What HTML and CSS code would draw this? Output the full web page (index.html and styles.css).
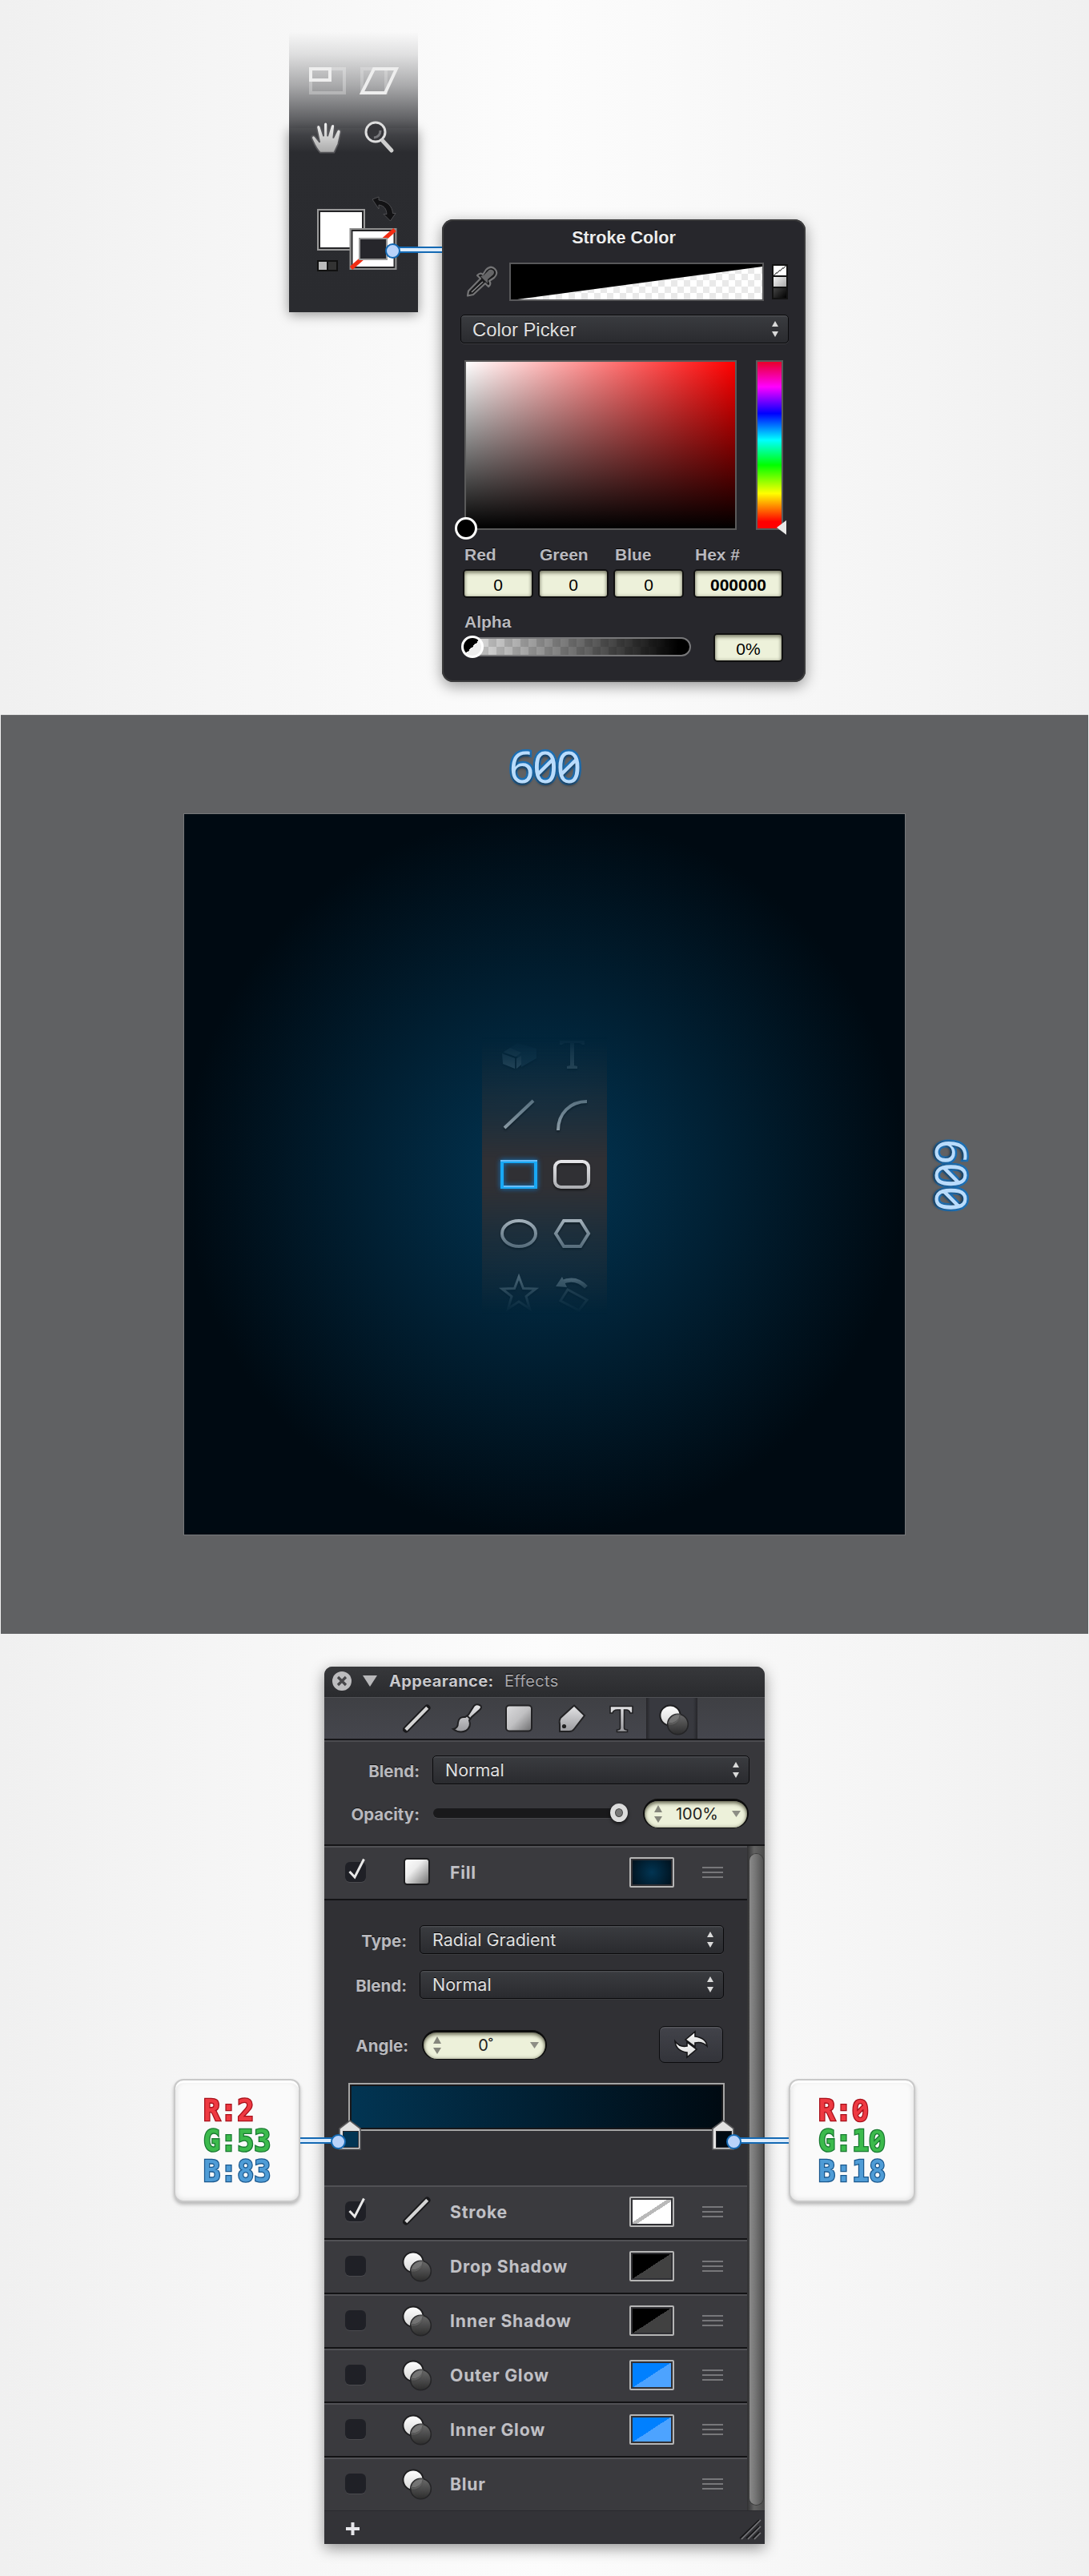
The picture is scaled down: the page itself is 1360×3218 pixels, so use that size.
FILE: index.html
```html
<!DOCTYPE html>
<html lang="en">
<head>
<meta charset="utf-8">
<title>Background setup</title>
<link rel="stylesheet" href="styles.css">
</head>
<body>
<svg class="defs" width="0" height="0" aria-hidden="true">
  <defs>
    <linearGradient id="silver" x1="0" y1="0" x2="0" y2="1"><stop offset="0" stop-color="#f4f4f4"/><stop offset="1" stop-color="#a9a9a9"/></linearGradient>
    <linearGradient id="pearl" x1="0" y1="0" x2="0" y2="1"><stop offset="0" stop-color="#fff"/><stop offset="1" stop-color="#d6d6d6"/></linearGradient>
    <linearGradient id="silverUser" gradientUnits="userSpaceOnUse" x1="0" y1="4" x2="0" y2="46"><stop offset="0" stop-color="#ededf0"/><stop offset="1" stop-color="#a6a8ac"/></linearGradient>
    <linearGradient id="steel" gradientUnits="userSpaceOnUse" x1="0" y1="2" x2="0" y2="34"><stop offset="0" stop-color="#e4e4e6"/><stop offset="1" stop-color="#9a9a9e"/></linearGradient>
    <linearGradient id="tile" x1="0" y1="0" x2="1" y2="1"><stop offset="0" stop-color="#fff"/><stop offset=".4" stop-color="#ececec"/><stop offset="1" stop-color="#6c6c6c"/></linearGradient>
    <linearGradient id="tileTool" x1="0" y1="0" x2="1" y2="1"><stop offset="0" stop-color="#dcdcde"/><stop offset=".5" stop-color="#c0c0c2"/><stop offset="1" stop-color="#6b6b6d"/></linearGradient>
    <linearGradient id="smoke" x1="0" y1="0" x2="0" y2="1"><stop offset="0" stop-color="#707070"/><stop offset="1" stop-color="#2b2b2b"/></linearGradient>
    <symbol id="i-fx" viewBox="0 0 38 42">
      <circle cx="14" cy="15" r="12.6" fill="url(#pearl)" stroke="#1e1e20" stroke-width="2"/>
      <circle cx="23.5" cy="26" r="12.8" fill="url(#smoke)" fill-opacity=".9" stroke="#252527" stroke-width="1.6"/>
      <path d="M11.5 24.5A12.6 12.6 0 0 0 26.5 13.8 12.8 12.8 0 0 0 11.5 24.5z" fill="#777" fill-opacity=".7" stroke="#555" stroke-width="1"/>
    </symbol>
    <symbol id="i-line" viewBox="0 0 36 36"><path d="M4 31.5 30.5 4.5" stroke="#19191b" stroke-width="8" stroke-linecap="round"/><path d="M3.8 31.7 30.7 4.3" stroke="#d4d4d4" stroke-width="4.2"/></symbol>
    <symbol id="i-tile" viewBox="0 0 36 36"><rect x="2" y="2" width="31" height="32" rx="3.5" fill="url(#tile)" stroke="#1d1d1f" stroke-width="2"/></symbol>
    <symbol id="i-grip" viewBox="0 0 26 14"><path d="M0 1h26M0 7h26M0 13h26" stroke="#77777a" stroke-width="2"/></symbol>
    <symbol id="i-check" viewBox="0 0 26 30"><path d="M5.5 17 12 24 23.5 1.5" fill="none" stroke="#e8e8e8" stroke-width="3"/></symbol>
    <symbol id="i-stepper" viewBox="0 0 8 20"><path d="M0 7 4 0 8 7zM0 13l4 7 4-7z" fill="#dadada"/></symbol>
    <symbol id="i-stepper2" viewBox="0 0 10 22"><path d="M0 9 5 0l5 9zM0 14l5 8 5-8z" fill="#85867c"/></symbol>
    <symbol id="i-stop" viewBox="0 0 28 38"><path d="M1 37V11L14 1.2 27 11v26z" fill="#e2e2e2" stroke="#58585a" stroke-width="1.6"/></symbol>
  </defs>
</svg>

<section class="step step-color">
  <div class="palette">
    <div class="palette-tools">
      <svg width="52" height="40" viewBox="0 0 52 40"><path d="M5 5h42v30H5z" fill="none" stroke="#fff" stroke-opacity=".28" stroke-width="4"/><path d="M5 5h24v14H5z" fill="none" stroke="#eee" stroke-width="4"/></svg>
      <svg width="52" height="40" viewBox="0 0 52 40"><path d="M5 5h30v30H5z" fill="none" stroke="#fff" stroke-opacity=".22" stroke-width="4"/><path d="M20 5h28L34 35H5z" fill="none" stroke="#eee" stroke-width="4"/></svg>
      <svg width="46" height="47" viewBox="0 0 42 44" preserveAspectRatio="none"><path d="M13.5 39C8 33 6.500 28 4 22.500 3 19 6.500 18 8.500 21L13 27 9.500 10C9 6 13 5.500 14 9L17.500 20V6C17.500 2.500 22 2.500 22 6V20L25.500 8C26.500 4.500 31 5.500 30 9L28.500 22 32.500 13.500C34 10.500 38 12 37 15.500L34 29 29.500 39z" fill="url(#silver)" stroke="#555559" stroke-width="1.6"/></svg>
      <svg width="42" height="44" viewBox="0 0 42 44"><circle cx="17" cy="16" r="12" fill="#36363a" stroke="#dedede" stroke-width="3"/><path d="M15 23q8-1 8-9" fill="none" stroke="#77777b" stroke-width="3"/><path d="M26 27 37 39" stroke="#cfcfcf" stroke-width="5" stroke-linecap="round"/></svg>
    </div>
    <svg class="palette-swatches" width="102" height="94" viewBox="0 0 102 94">
      <path d="M69 4 77 1v4c11 1 17 8 17.500 16.500H98L91.500 31 83 22.500h4C86.500 16 84 12 77 11v5z" fill="#121214" stroke="#58585c" stroke-width=".8"/>
      <rect x="1" y="17" width="58" height="50" fill="#fff" stroke="#9a9a9a" stroke-width="2"/><rect x="3" y="19" width="54" height="46" fill="#fff" stroke="#242426" stroke-width="2"/>
      <rect x="41.500" y="41" width="57" height="50" fill="#fff" stroke="#8e8e8e" stroke-width="2"/><rect x="43.500" y="43" width="53" height="46" fill="#fff" stroke="#242426" stroke-width="2"/>
      <path d="M42.500 90 97 42" stroke="#f22c12" stroke-width="5"/>
      <rect x="53" y="53" width="34" height="26" fill="#26262b" stroke="#999" stroke-width="2"/>
      <rect x="0" y="80" width="26" height="14" fill="#111"/><rect x="2" y="82" width="10" height="10" fill="#bbb"/><rect x="14" y="82" width="10" height="10" fill="#333"/>
    </svg>
    <span class="lead lead-stroke"></span>
  </div>

  <div class="popover">
    <h2 class="popover-title">Stroke Color</h2>
    <div class="preview-row">
      <svg width="40" height="42" viewBox="0 0 40 42"><path d="M3 38.500l1-6L19 17l-4-4q4-4 7-1l4-6q6-6 11-1t-1 11l-6 4q3 4-1 7l-4-4L10 37z" fill="#1a1a1c" stroke="#747476" stroke-width="2.200" stroke-linejoin="round"/><path d="M19 14l4-1 7-7q3-1 5 1t0 5l-7 6v5z" fill="#656567"/><path d="M8 34 22 21" stroke="#8a8a8c" stroke-width="1.600"/></svg>
      <div class="stroke-preview"><svg width="314" height="44" viewBox="0 0 314 44"><path d="M0 0h314v3L8 44H0z" fill="#000"/></svg></div>
      <div class="kinds"><i class="kind kind-none"></i><i class="kind kind-fill"></i><i class="kind kind-dark"></i></div>
    </div>
    <div class="select select-picker"><span>Color Picker</span><svg width="8" height="20"><use href="#i-stepper"/></svg></div>
    <div class="field-row">
      <div class="sat-box"><span class="sat-dot"></span></div>
      <div class="hue"><svg class="hue-mark" width="12" height="18" viewBox="0 0 12 18"><path d="M0 9 12 0v18z" fill="#e8e8e8"/></svg></div>
    </div>
    <div class="channels">
      <label>Red<b class="num">0</b></label><label>Green<b class="num">0</b></label><label>Blue<b class="num">0</b></label><label class="hex">Hex #<b class="num num-bold">000000</b></label>
    </div>
    <div class="alpha-label">Alpha</div>
    <div class="alpha-row"><div class="alpha"><span class="alpha-dot"></span></div><b class="num num-alpha">0%</b></div>
  </div>
</section>

<section class="stage">
  <div class="dim dim-top">600</div>
  <div class="stage-row">
    <div class="canvas">
      <div class="strip">
        <svg width="50" height="50" viewBox="0 0 50 50"><path d="M5 22 23 10l24 7v12L28 40V29z" fill="#536673"/><path d="M4 23l16 6v13L5 36zM22 29l6-3v11l-6 5zM6 21l8-5 14 6-7 5z" fill="#9eabb2"/></svg>
        <svg width="50" height="50" viewBox="0 0 50 50"><path d="M10 12V7h31v5h-3q-1-2-4-2h-6v28l4 1v3H19v-3l4-1V10h-6q-3 0-4 2z" fill="url(#silver)"/></svg>
        <svg width="50" height="50" viewBox="0 0 50 50"><path d="M7 41 43 7" stroke="#c6c9cc" stroke-width="4"/></svg>
        <svg width="50" height="50" viewBox="0 0 50 50"><path d="M8 44C8 23 23 8 44 8" fill="none" stroke="#c6c9cc" stroke-width="4"/></svg>
        <svg class="active" width="50" height="50" viewBox="0 0 50 50"><path d="M4 9h42v32H4z" fill="none" stroke="#18a8f5" stroke-width="4"/><path d="M2 8h46M6 40h38" stroke="#69bdf8" stroke-width="2"/></svg>
        <svg width="50" height="50" viewBox="0 0 50 50"><rect x="4" y="9" width="42" height="32" rx="7.500" fill="none" stroke="url(#silverUser)" stroke-width="4.200"/></svg>
        <svg width="50" height="50" viewBox="0 0 50 50"><ellipse cx="25" cy="25" rx="21" ry="16" fill="none" stroke="url(#silverUser)" stroke-width="4"/></svg>
        <svg width="50" height="50" viewBox="0 0 50 50"><path d="M15 9h21l10 16-10 16H15L5 25z" fill="none" stroke="url(#silverUser)" stroke-width="4"/></svg>
        <svg width="50" height="50" viewBox="0 0 50 50"><path d="M25 4l5.500 14.500L46 19 34 28.500 38.500 44 25 35 11.500 44 16 28.500 4 19l15.500-.5z" fill="none" stroke="url(#silver)" stroke-width="3"/></svg>
        <svg width="50" height="50" viewBox="0 0 50 50"><path d="M12 11q18-8 31 6" fill="none" stroke="url(#silver)" stroke-width="5"/><path d="M5 16 13 4l6 13z" fill="#ddd"/><path d="M20 20 44 33 34 46 11 34z" fill="none" stroke="#999" stroke-width="3"/></svg>
      </div>
    </div>
    <div class="dim dim-side">600</div>
  </div>
</section>

<section class="step step-fill">
  <div class="callout callout-left">
    <div class="ch r">R:2</div><div class="ch g">G:53</div><div class="ch b">B:83</div>
    <span class="lead lead-left"></span>
  </div>

  <div class="panel">
    <header class="panel-head">
      <svg width="24" height="24" viewBox="0 0 24 24"><circle cx="12" cy="12" r="12" fill="#bdbdbf"/><path d="M7 7l10 10M17 7 7 17" stroke="#47474a" stroke-width="3.200"/></svg>
      <svg width="18" height="14" viewBox="0 0 18 14"><path d="M0 0h18L9 14z" fill="#b8b8ba"/></svg>
      <strong>Appearance:</strong><span>Effects</span>
    </header>
    <nav class="tabs">
      <i><svg width="36" height="36"><use href="#i-line"/></svg></i>
      <i><svg width="36" height="36" viewBox="0 0 36 36"><path d="M0 31q6-1 6-8 1-8 9-7l4-3 7-11q3-3 7-1t0 6l-10 9-3 4q3 8-4 13-8 4-16-2z" fill="url(#steel)" stroke="#202022" stroke-width="2"/><path d="M17 14l5 5" stroke="#202022" stroke-width="2"/></svg></i>
      <i><svg width="36" height="36" viewBox="0 0 36 36"><rect x="2" y="1.500" width="32" height="32" rx="4" fill="url(#tileTool)" stroke="#222224" stroke-width="2"/></svg></i>
      <i><svg width="36" height="36" viewBox="0 0 36 36"><path d="M23 1.500 36 14 23 31q-2 3-6 3H5V25Q4 20 6 17z" fill="url(#steel)" stroke="#222224" stroke-width="2"/><circle cx="10.500" cy="27.500" r="2.600" fill="#222"/></svg></i>
      <i><svg width="36" height="36" viewBox="0 0 36 36"><path d="M5 11V2.500h28V11h-3q-1-4-5-4h-2.500v22.500q0 2.500 4 2.500v2.500h-13V32q4 0 4-2.500V7H14q-5 0-6 4z" fill="url(#steel)" stroke="#202022" stroke-width="1.600"/></svg></i>
      <i class="on"><svg width="38" height="42"><use href="#i-fx"/></svg></i>
    </nav>
    <div class="global">
      <div class="line"><span class="lbl">Blend:</span><div class="select"><span>Normal</span><svg width="8" height="20"><use href="#i-stepper"/></svg></div></div>
      <div class="line line-opacity"><span class="lbl">Opacity:</span><div class="track"><span class="knob"></span></div>
        <div class="pill"><svg width="10" height="22"><use href="#i-stepper2"/></svg><span>100%</span><svg width="11" height="8" viewBox="0 0 11 8"><path d="M0 0h11L5.500 8z" fill="#8d8e85"/></svg></div></div>
    </div>
    <div class="scroller">
      <div class="list">
        <div class="row"><span class="box"><svg width="26" height="30"><use href="#i-check"/></svg></span><svg class="ico" width="36" height="36"><use href="#i-tile"/></svg><span class="name">Fill</span><span class="chip chip-fill"></span><svg class="grip" width="26" height="14"><use href="#i-grip"/></svg></div>
        <div class="detail">
          <div class="line"><span class="lbl">Type:</span><div class="select"><span>Radial Gradient</span><svg width="8" height="20"><use href="#i-stepper"/></svg></div></div>
          <div class="line"><span class="lbl">Blend:</span><div class="select"><span>Normal</span><svg width="8" height="20"><use href="#i-stepper"/></svg></div></div>
          <div class="line line-angle"><span class="lbl">Angle:</span>
            <div class="pill pill-angle"><svg width="10" height="22"><use href="#i-stepper2"/></svg><span>0˚</span><svg width="11" height="8" viewBox="0 0 11 8"><path d="M0 0h11L5.500 8z" fill="#8d8e85"/></svg></div>
            <div class="swap"><svg width="46" height="34" viewBox="0 0 46 34"><path d="M16 11 28 1v6q14 2 15 12-6-6-15-4v5z" fill="url(#pearl)" stroke="#151517" stroke-width="1.600"/><path d="M30 23 18 33v-6Q4 25 3 13q6 8 15 6v-5z" fill="url(#pearl)" stroke="#151517" stroke-width="1.600"/></svg></div>
          </div>
          <div class="ramp">
            <span class="stop stop-a"><svg width="28" height="38"><use href="#i-stop"/></svg></span>
            <span class="stop stop-b"><svg width="28" height="38"><use href="#i-stop"/></svg></span>
          </div>
        </div>
        <div class="row"><span class="box"><svg width="26" height="30"><use href="#i-check"/></svg></span><svg class="ico" width="36" height="36"><use href="#i-line"/></svg><span class="name">Stroke</span><span class="chip chip-none"></span><svg class="grip" width="26" height="14"><use href="#i-grip"/></svg></div>
        <div class="row"><span class="box"></span><svg class="ico" width="38" height="42"><use href="#i-fx"/></svg><span class="name">Drop Shadow</span><span class="chip chip-dark"></span><svg class="grip" width="26" height="14"><use href="#i-grip"/></svg></div>
        <div class="row"><span class="box"></span><svg class="ico" width="38" height="42"><use href="#i-fx"/></svg><span class="name">Inner Shadow</span><span class="chip chip-dark"></span><svg class="grip" width="26" height="14"><use href="#i-grip"/></svg></div>
        <div class="row"><span class="box"></span><svg class="ico" width="38" height="42"><use href="#i-fx"/></svg><span class="name">Outer Glow</span><span class="chip chip-blue"></span><svg class="grip" width="26" height="14"><use href="#i-grip"/></svg></div>
        <div class="row"><span class="box"></span><svg class="ico" width="38" height="42"><use href="#i-fx"/></svg><span class="name">Inner Glow</span><span class="chip chip-blue"></span><svg class="grip" width="26" height="14"><use href="#i-grip"/></svg></div>
        <div class="row row-last"><span class="box"></span><svg class="ico" width="38" height="42"><use href="#i-fx"/></svg><span class="name">Blur</span><svg class="grip" width="26" height="14"><use href="#i-grip"/></svg></div>
      </div>
      <div class="bar"><div class="thumb"></div></div>
    </div>
    <footer class="panel-foot">
      <svg width="17" height="16" viewBox="0 0 17 16"><path d="M6.500 0h4v6H17v4h-6.500v6h-4v-6H0V6h6.500z" fill="#e6e6ea"/></svg>
      <svg width="26" height="26" viewBox="0 0 26 26"><path d="M0 25 24 2M8 25 24 10M16 25l8-8" stroke="#151517" stroke-width="1.600"/><path d="M2 26 26 2M10 26 26 10M18 26l8-8" stroke="#77777a" stroke-width="1.600"/></svg>
    </footer>
  </div>

  <div class="callout callout-right">
    <div class="ch r">R:<span class="z">0</span></div><div class="ch g">G:1<span class="z">0</span></div><div class="ch b">B:18</div>
    <span class="lead lead-right"></span>
  </div>
</section>
</body>
</html>
```
FILE: styles.css
```css
* { box-sizing: border-box; }
body {
  margin: 0;
  width: 1360px;
  background: linear-gradient(90deg, #f0f0f0, #f4f4f4 15%, #fcfcfc 50%, #f4f4f4 85%, #f0f0f0);
  font-family: Inter, "Liberation Sans", sans-serif;
  color: #b9b9be;
}
svg { display: block; flex: none; overflow: visible; }
.defs { position: absolute; }
.step { display: flex; align-items: flex-start; }
.step-color { height: 893px; padding-left: 361px; gap: 30px; }

/* tool palette */
.palette {
  position: relative;
  width: 161px;
  height: 350px;
  margin-top: 40px;
  padding: 41px 0 0 22px;
  background: linear-gradient(180deg, rgba(43,44,48,0), rgba(43,44,48,.12) 8%, rgba(43,44,48,.38) 19%, rgba(43,44,48,.68) 29%, rgba(43,44,48,.9) 37%, #2b2c30 43%, #2a2b2f);
}
.palette::before {
  content: "";
  position: absolute;
  inset: 120px 0 0;
  z-index: -1;
  box-shadow: 0 3px 14px rgba(0,0,0,.4);
}
.palette-tools {
  display: grid;
  grid-template-columns: 58px 58px;
  grid-template-rows: 68px 44px;
  gap: 0 6px;
}
.palette-tools svg:nth-child(3) { margin-left: 2px; }
.palette-tools svg:nth-child(4) { margin-left: 5px; }
.palette-swatches { margin: 52px 0 0 13px; }

/* pointer lines */
.lead {
  position: absolute;
  z-index: 2;
  height: 8px;
  background: #dcecfc;
  border: solid #1469b3;
  border-width: 2px 0;
}
.lead::after {
  content: "";
  position: absolute;
  top: -6px;
  width: 15px;
  height: 15px;
  border-radius: 50%;
  background: #b9d3fa;
  border: 2px solid #1469b3;
}
.lead-stroke { left: 127px; top: 268px; width: 64px; }
.lead-stroke::after { left: -7px; }
.lead-left { left: 158px; top: 73px; width: 49px; }
.lead-left::after { right: -8px; }
.lead-right { right: 158px; top: 73px; width: 70px; }
.lead-right::after { left: -8px; }

/* stroke colour popover */
.popover {
  width: 454px;
  height: 578px;
  margin-top: 274px;
  padding-top: 2px;
  border-radius: 14px;
  background: #27272c;
  box-shadow: inset 0 0 0 2px #3b3b3c, 0 5px 18px rgba(0,0,0,.4);
  font-family: "Liberation Sans", Arial, sans-serif;
}
.popover-title {
  margin: 0;
  text-align: center;
  font-size: 21.600px;
  line-height: 42px;
  color: #ececec;
  text-shadow: 0 -1px #000;
}
.preview-row { display: flex; margin: 10px 22px 0 29px; }
.preview-row > svg { margin-top: 3px; }
.stroke-preview {
  width: 318px;
  height: 48px;
  margin-left: 15px;
  border: 2px solid #58585a;
  background: #fff conic-gradient(#e9e9e9 25%, #fff 0 50%, #e9e9e9 0 75%, #fff 0) 0 4px / 16px 16px;
}
.kinds { display: flex; flex-direction: column; gap: 2px; width: 20px; height: 44px; margin: 2px 0 0 10px; padding: 2px; background: #121212; }
.kind { flex: 1; }
.kind-none { background: linear-gradient(to bottom right, #fff 46%, #777 46% 54%, #fff 54%); }
.kind-fill { background: linear-gradient(135deg, #f4f4f4, #aaa); }
.kind-dark { background: linear-gradient(135deg, #444, #000); }
.select {
  display: flex;
  align-items: center;
  justify-content: space-between;
  height: 36px;
  padding: 0 12px 0 15px;
  border: 1.500px solid #0a0a0c;
  border-radius: 5px;
  background: linear-gradient(#3a3c40, #2a2b2f);
  box-shadow: inset 0 1.500px #4b4d51, 0 1px #3c3d40;
  color: #e0e0e0;
  font-size: 21.500px;
  text-shadow: 0 -1px #000;
  white-space: nowrap;
}
.select-picker { margin: 17px 21px 0 23px; padding-left: 14px; font-size: 23.800px; }
.select-picker span { padding-top: 2px; }
.field-row { display: flex; gap: 24px; margin: 21px 0 0 28px; }
.sat-box {
  position: relative;
  width: 340px;
  height: 212px;
  border: 2px solid #5a5a5a;
  background: linear-gradient(rgba(0,0,0,0), #000), linear-gradient(90deg, #fff, #f00);
}
.sat-dot {
  position: absolute;
  left: -14px;
  bottom: -14px;
  width: 28px;
  height: 28px;
  border: 3px solid #fff;
  border-radius: 50%;
  background: #000;
}
.hue {
  position: relative;
  width: 34px;
  height: 212px;
  border: 2px solid #5a5a5a;
  background: linear-gradient(#e8002a, #f0f 15%, #00f 31%, #0ff 47%, #0f0 62%, #ff0 79%, #f00 96%);
}
.hue-mark { position: absolute; right: -6px; bottom: -8px; }
.channels { display: flex; margin: 17px 0 0 26px; font-size: 21px; font-weight: 700; line-height: 28px; text-indent: 2px; text-shadow: 0 -1px #000; }
.channels label { width: 88px; margin-right: 6px; white-space: nowrap; }
.channels .hex { width: 112px; margin: 0 0 0 6px; }
.num {
  display: block;
  height: 36px;
  margin-top: 4px;
  padding-top: 4px;
  border: 2px solid #101010;
  border-radius: 5px;
  background: #edf1da;
  box-shadow: inset 0 3px 4px rgba(60,60,40,.5), inset 0 0 4px rgba(60,60,40,.4);
  color: #000;
  font-size: 21px;
  font-weight: 400;
  text-align: center;
  text-indent: 0;
  text-shadow: none;
}
.num-bold { font-weight: 700; }
.alpha-label { margin: 16px 0 0 28px; font-size: 21px; font-weight: 700; line-height: 28px; text-shadow: 0 -1px #000; }
.alpha-row { display: flex; margin-left: 26px; line-height: 28px; }
.alpha {
  position: relative;
  width: 285px;
  height: 24px;
  margin: 5px 28px 0 0;
  border: 2px solid #777779;
  border-radius: 12px;
  background: linear-gradient(90deg, rgba(0,0,0,.05), #000 95%), #eee conic-gradient(#d8d8d8 25%, #f4f4f4 0 50%, #d8d8d8 0 75%, #f4f4f4 0) 0 0 / 20px 20px;
}
.alpha-dot {
  position: absolute;
  left: -4px;
  top: -4px;
  width: 28px;
  height: 28px;
  border: 3px solid #fff;
  border-radius: 50%;
  background: linear-gradient(135deg, #000 50%, #eee 50%);
}
.num-alpha { width: 87px; margin-top: 0; }

/* canvas stage */
.stage {
  height: 1148px;
  margin: 0 1px;
  background: #606163;
  border-top: 1px solid #6c6d6f;
}
.stage-row { display: flex; align-items: center; padding-left: 228px; }
.dim {
  font-family: "Noto Sans", sans-serif;
  font-size: 55px;
  letter-spacing: -2px;
  color: #b9dcfc;
  -webkit-text-stroke: 5px #1c6fb4;
  paint-order: stroke fill;
  font-feature-settings: "zero";
  text-shadow: 0 3px 3px rgba(30,30,30,.6);
}
.dim-top { height: 122px; line-height: 125px; text-align: center; }
.dim-side { writing-mode: vertical-rl; line-height: 60px; margin-left: 28px; }
.canvas {
  display: flex;
  align-items: center;
  justify-content: center;
  width: 902px;
  height: 902px;
  border: 1px solid #77787a;
  background: radial-gradient(circle 450px, rgb(2,53,83), rgb(0,10,18)) padding-box;
}
.strip {
  display: grid;
  grid-template: repeat(5, 74.400px) / 66px 66px;
  place-items: center;
  width: 156px;
  height: 372px;
  padding-left: 13px;
  background: #303034;
  -webkit-mask-image: linear-gradient(transparent 4%, rgba(0,0,0,.13) 11%, rgba(0,0,0,.56) 30%, #000 45%, #000 54%, rgba(0,0,0,.62) 69%, rgba(0,0,0,.22) 88%, transparent 97%);
  mask-image: linear-gradient(transparent 4%, rgba(0,0,0,.13) 11%, rgba(0,0,0,.56) 30%, #000 45%, #000 54%, rgba(0,0,0,.62) 69%, rgba(0,0,0,.22) 88%, transparent 97%);
}
.strip svg { filter: drop-shadow(0 2px 1px rgba(0,0,0,.5)); }
.strip .active { filter: drop-shadow(0 0 3px #0b7fd6); }

/* fill section */
.step-fill { height: 1177px; padding-left: 217px; gap: 30px; }
.callout {
  position: relative;
  width: 158px;
  height: 154px;
  margin-top: 556px;
  padding: 18px 0 0 35px;
  border: 2px solid #c9c9c9;
  border-radius: 12px;
  background: #fafafa;
  box-shadow: inset 0 3px 1px #fff, inset 0 0 7px rgba(0,0,0,.14), 0 3px 4px rgba(0,0,0,.25);
}
.callout .lead { margin: -2px -2px 0; }
.ch {
  height: 38px;
  font: 700 35px/38px "DejaVu Sans Mono", monospace;
  transform: scaleY(1.080);
  -webkit-text-stroke: 2.500px;
  paint-order: stroke fill;
}
.ch .z {
  display: inline-block;
  width: 21px;
  height: 38px;
  vertical-align: top;
  font: 600 35.500px/37px "Noto Sans", sans-serif;
  font-feature-settings: "zero";
}
.r { color: #ee3a42; -webkit-text-stroke-color: #a8101a; }
.g { color: #3cba4c; -webkit-text-stroke-color: #197a31; }
.b { color: #4f9cd6; -webkit-text-stroke-color: #1a588e; }
.panel {
  width: 550px;
  height: 1096px;
  margin-top: 41px;
  border-radius: 10px 10px 0 0;
  background: #37373b;
  box-shadow: 0 5px 18px rgba(0,0,0,.42);
  font-size: 20px;
}
.panel-head {
  display: flex;
  align-items: center;
  height: 38px;
  padding: 0 0 3px 10px;
  border-radius: 10px 10px 0 0;
  background: linear-gradient(#37383b, #2a2b2e);
  color: #c8c8cc;
  text-shadow: 0 -1px #000;
}
.panel-head svg + svg { margin: 0 15px 0 14px; }
.panel-head strong { width: 144px; letter-spacing: .4px; }
.panel-head span { color: #a7a7ab; letter-spacing: .3px; }
.tabs {
  display: flex;
  height: 54px;
  padding-left: 84px;
  border-top: 1px solid #505155;
  border-bottom: 2px solid #161618;
  background: linear-gradient(#3f4044, #45464d);
}
.tabs i { display: flex; align-items: center; justify-content: center; width: 63.600px; }
.tabs .on { padding: 5px 0 0 6px; background: linear-gradient(90deg, #26262a, #38393f 8%, #38393f 92%, #26262a); }
.global {
  height: 132px;
  padding: 17px 19px 0 0;
  border-top: 2px solid #4b4b4f;
  border-bottom: 2px solid #161618;
}
.line { display: flex; align-items: center; height: 36px; }
.lbl { width: 103px; text-align: right; font-weight: 700; font-size: 20.500px; padding-top: 2px; text-shadow: 0 -1px #111; }
.global .lbl { width: 119px; }
.global .select { width: 396px; margin-left: 16px; }
.line-opacity { margin-top: 18px; }
.track {
  position: relative;
  width: 240px;
  height: 12px;
  margin-left: 17px;
  border-radius: 6px;
  background: #19191b;
  box-shadow: 0 1px #46464a;
}
.knob {
  position: absolute;
  right: -3px;
  top: -6px;
  width: 22px;
  height: 23px;
  border: 6px solid #dcdcdc;
  border-radius: 50%;
  background: #777;
  box-shadow: 0 2px 4px rgba(0,0,0,.7), inset 0 0 0 1px #444;
}
.pill {
  display: flex;
  align-items: center;
  width: 132px;
  height: 37px;
  margin-left: 22px;
  padding: 0 8px 0 12px;
  border: solid #0d0d0d;
  border-width: 3px 2px 1px;
  border-radius: 19px;
  background: #edf1da;
  box-shadow: inset 0 3px 4px rgba(60,60,40,.6), inset 0 0 4px rgba(60,60,40,.5);
  color: #222;
}
.pill span { flex: 1; text-align: center; }
.scroller { display: flex; height: 830px; }
.list { width: 528px; }
.row {
  display: flex;
  align-items: flex-start;
  height: 68px;
  padding-left: 26px;
  border-top: 2px solid #515155;
  border-bottom: 2px solid #131315;
  background: #3a3a3e;
}
.row-last { height: 66px; border-bottom: 0; }
.box { width: 26px; height: 25px; margin-top: 18px; border-radius: 6px; background: #1f2026; box-shadow: 0 1px #4a4a4e; }
.box svg { margin-top: -5px; }
.ico { margin: 12px 0 0 46px; }
.ico[width="38"] { margin-top: 11px; margin-left: 45px; }
.name { margin: 15px 0 0 23px; width: 224px; line-height: 32px; font-weight: 700; font-size: 21.200px; letter-spacing: .800px; white-space: nowrap; color: #c0c0c5; }
.ico[width="38"] + .name { margin-left: 22px; }
.chip {
  width: 56px;
  height: 38px;
  margin-top: 12px;
  border: 2px solid #b5b5b5;
  border-radius: 2px;
  box-shadow: inset 0 0 0 2px #303034;
}
.chip-fill { background: radial-gradient(circle, rgb(2,53,83), rgb(0,14,24)); }
.chip-none { background: linear-gradient(to bottom right, #fff 46%, #b9b9b9 46% 54%, #fff 54%); }
.chip-dark { background: linear-gradient(to bottom right, #000 50%, #414141 50%); }
.chip-blue { background: linear-gradient(to bottom right, #0080ff 50%, #4da3ff 50%); }
.grip { margin: 24px 30px 0 auto; }
.detail { height: 356px; padding-top: 31px; background: #303034; }
.detail .select { width: 380px; margin-left: 16px; }
.detail .line + .line { margin-top: 20px; }
.detail .line-angle { height: 46px; }
.detail .line.line-angle { margin-top: 34px; }
.line-angle .lbl { width: 105px; }
.pill-angle { width: 156px; margin-left: 17px; }
.swap {
  display: flex;
  align-items: center;
  justify-content: center;
  width: 80px;
  height: 46px;
  margin-left: 140px;
  border: 1.500px solid #0c0c0e;
  border-radius: 7px;
  background: linear-gradient(#42434a, #33343a);
  box-shadow: inset 0 1.500px #56575c;
}
.ramp {
  position: relative;
  width: 470px;
  height: 60px;
  margin: 25px 0 0 30px;
  border: 2px solid #a5a5a5;
  box-shadow: inset 0 0 0 2px #17171a;
  background: linear-gradient(90deg, rgb(2,53,83), rgb(0,10,18));
}
.stop { position: absolute; top: 44px; width: 28px; height: 38px; }
.stop::after { content: ""; position: absolute; left: 5px; top: 14px; width: 18px; height: 19px; border: 1px solid #26262a; }
.stop-a { left: -14px; }
.stop-b { right: -14px; }
.stop-a::after { background: #023553; }
.stop-b::after { background: #000a12; }
.bar { width: 22px; background: linear-gradient(90deg, #303032, #626262 40%, #4b4b4b); }
.thumb {
  width: 17px;
  height: 813px;
  margin: 10px 0 0 3px;
  border-radius: 9px;
  background: linear-gradient(90deg, #8a8a8a, #777 40%, #525252);
  box-shadow: 0 0 0 1px #3c3c3c;
}
.panel-foot {
  display: flex;
  align-items: center;
  justify-content: space-between;
  height: 42px;
  padding: 2px 5px 0 27px;
  border-top: 1px solid #2a2a2e;
  background: #333337;
}
```
